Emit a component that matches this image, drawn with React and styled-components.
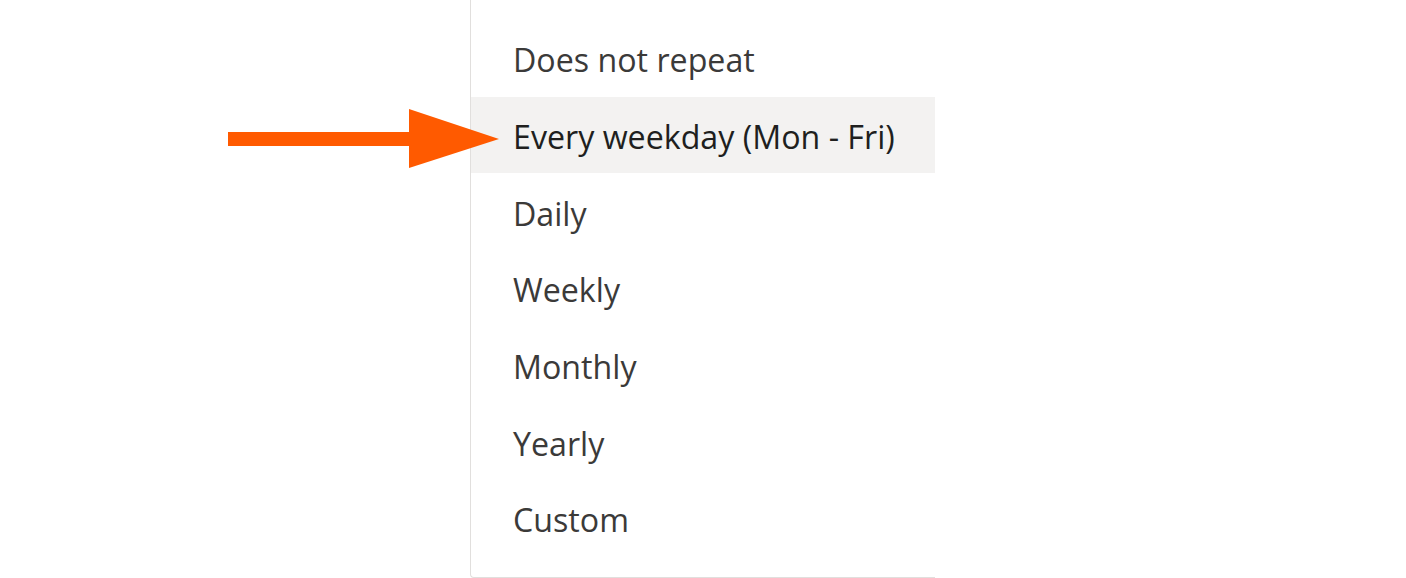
import React from 'react';
import styled, { createGlobalStyle } from 'styled-components';

const GlobalStyle = createGlobalStyle`
  html, body {
    margin: 0;
    padding: 0;
    background: #ffffff;
  }
  body {
    font-family: 'Open Sans', 'Noto Sans', sans-serif;
  }
`;

const Page = styled.div`
  position: relative;
  width: 1406px;
  height: 578px;
  overflow: hidden;
  display: flex;
  align-items: flex-start;
  padding-left: 470px;
  box-sizing: border-box;
`;

const Menu = styled.ul`
  list-style: none;
  margin: -10px 0 0;
  padding: 29px 0 20px;
  width: 465px;
  border: 1px solid #e1dfdd;
  border-right: none;
  border-radius: 4px 0 0 4px;
  background: #ffffff;
  box-sizing: border-box;
`;

const Item = styled.li`
  height: 76.67px;
  display: flex;
  align-items: center;
  padding: 3px 0 0 42px;
  box-sizing: border-box;
  font-size: 32.2px;
  color: ${(p) => (p.active ? '#201f1e' : '#3b3a39')};
  background: ${(p) => (p.active ? '#f3f2f1' : 'transparent')};
`;

const Arrow = styled.svg`
  position: absolute;
  left: 228px;
  top: 109px;
`;

const options = [
  'Does not repeat',
  'Every weekday (Mon - Fri)',
  'Daily',
  'Weekly',
  'Monthly',
  'Yearly',
  'Custom',
];

const App = () => (
  <Page>
    <GlobalStyle />
    <Menu>
      {options.map((label, i) => (
        <Item key={label} active={i === 1}>
          {label}
        </Item>
      ))}
    </Menu>
    <Arrow width="272" height="60" viewBox="0 0 272 60">
      <rect x="0" y="23" width="186" height="14" fill="#ff5a00" />
      <polygon points="181,0 271,30 181,59" fill="#ff5a00" />
    </Arrow>
  </Page>
);

export default App;
